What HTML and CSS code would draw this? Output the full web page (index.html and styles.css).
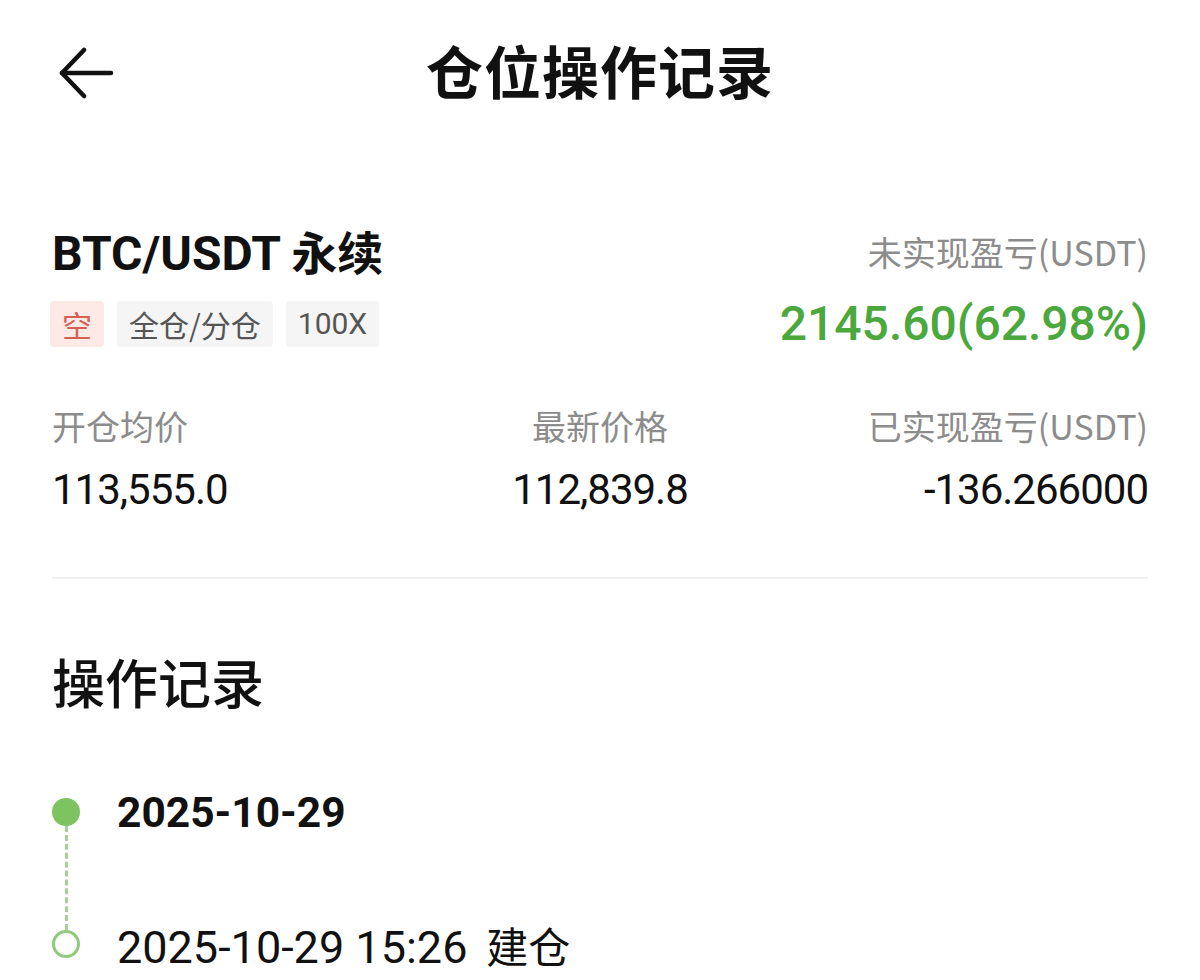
FILE: index.html
```html
<!DOCTYPE html>
<html lang="zh-CN">
<head>
  <meta charset="UTF-8" />
  <meta name="viewport" content="width=device-width, initial-scale=1.0"/>
  <title>仓位操作记录</title>
  <link rel="stylesheet" href="styles.css">
</head>
<body>

  <!-- 顶部导航 -->
  <header class="topbar">
    <a class="back" href="#">
      <svg width="56" height="52" viewBox="0 0 56 52" fill="none" stroke="#111" stroke-width="4.5" stroke-linecap="round" stroke-linejoin="round">
        <path d="M4 26 H53"/>
        <path d="M26 3 L4 26 L26 49"/>
      </svg>
    </a>
    <h1 class="title">仓位操作记录</h1>
    <span></span>
  </header>

  <main class="page">

    <!-- 仓位概览 -->
    <section class="position">
      <div class="pos-head">
        <div class="pos-left">
          <div class="symbol"><span class="num">BTC/USDT</span> 永续</div>
          <div class="tags">
            <span class="tag tag-short">空</span>
            <span class="tag">全仓/分仓</span>
            <span class="tag num">100X</span>
          </div>
        </div>
        <div class="pos-right">
          <div class="label">未实现盈亏(USDT)</div>
          <div class="pnl num">2145.60(62.98%)</div>
        </div>
      </div>

      <div class="stats">
        <div class="stat">
          <div class="label">开仓均价</div>
          <div class="value num">113,555.0</div>
        </div>
        <div class="stat center">
          <div class="label">最新价格</div>
          <div class="value num">112,839.8</div>
        </div>
        <div class="stat right">
          <div class="label">已实现盈亏(USDT)</div>
          <div class="value num">-136.266000</div>
        </div>
      </div>
    </section>

    <!-- 操作记录 -->
    <section class="records">
      <h2 class="section-title">操作记录</h2>
      <ul class="timeline">
        <li class="tl-item">
          <span class="dot dot-fill"></span>
          <span class="tl-date num">2025-10-29</span>
        </li>
        <li class="tl-item">
          <span class="dot dot-ring"></span>
          <span class="tl-text"><span class="num">2025-10-29 15:26</span>  建仓</span>
        </li>
      </ul>
    </section>

  </main>

</body>
</html>
```

FILE: styles.css
```css
body {
  margin: 0;
  background: #ffffff;
  color: #111111;
  font-family: 'Noto Sans CJK SC', 'Noto Sans', sans-serif;
}
.num {
  font-family: 'Roboto', 'Noto Sans CJK SC', sans-serif;
}
.topbar {
  box-sizing: border-box;
  display: grid;
  grid-template-columns: 1fr auto 1fr;
  align-items: center;
  height: 146px;
  padding: 0 52px 8px;
}
.back {
  display: flex;
  width: 60px;
  margin: 8px 0 0 6px;
}
.title {
  margin: 0;
  font-size: 57px;
  font-weight: 700;
  letter-spacing: 1px;
  line-height: 1;
}
.page {
  padding: 0 52px;
}
.position {
  padding-top: 74px;
  border-bottom: 2px solid #f0f0f0;
  padding-bottom: 59px;
}
.pos-head {
  display: flex;
  justify-content: space-between;
}
.symbol {
  font-size: 46px;
  font-weight: 700;
  line-height: 60px;
}
.symbol .num {
  font-size: 48px;
}
.tags {
  display: flex;
  gap: 13px;
  margin: 17px 0 0 -2px;
}
.tag {
  background: #f5f5f5;
  color: #555555;
  font-size: 30px;
  line-height: 46px;
  padding: 0 12px;
  border-radius: 4px;
}
.tag-short {
  background: #fde9e5;
  color: #d35f55;
}
.pos-right {
  text-align: right;
}
.label {
  color: #8c8c8c;
  font-size: 34px;
  line-height: 44px;
}
.pos-right .label {
  margin-top: 10px;
}
.pnl {
  color: #4aa83c;
  font-size: 48px;
  line-height: 60px;
  margin-top: 20px;
  font-weight: 500;
}
.stats {
  display: grid;
  grid-template-columns: 1fr 1fr 1fr;
  margin-top: 50px;
}
.stat.center {
  text-align: center;
}
.stat.right {
  text-align: right;
}
.value {
  font-size: 42px;
  letter-spacing: -1px;
  line-height: 56px;
  margin-top: 14px;
}
.section-title {
  margin: 67px 0 0;
  font-size: 53px;
  font-weight: 500;
  line-height: 70px;
}
.timeline {
  list-style: none;
  margin: 73px 0 0;
  padding: 0;
}
.tl-item {
  position: relative;
  display: flex;
  align-items: center;
  height: 46px;
  padding-left: 65px;
}
.tl-item + .tl-item {
  margin-top: 86px;
}
.tl-item:first-child::after {
  content: "";
  position: absolute;
  left: 13px;
  top: 37px;
  height: 104px;
  border-left: 3px dashed #a9cf98;
}
.dot {
  position: absolute;
  left: 0;
  top: 50%;
  width: 28px;
  height: 28px;
  margin-top: -14px;
  border-radius: 50%;
  box-sizing: border-box;
}
.dot-fill {
  background: #7dc35f;
}
.dot-ring {
  border: 3px solid #8fc97a;
  background: #fff;
}
.tl-date {
  font-size: 42.5px;
  font-weight: 700;
}
.tl-text {
  font-size: 42px;
  white-space: pre;
}
.tl-text .num {
  font-size: 45px;
}
```
